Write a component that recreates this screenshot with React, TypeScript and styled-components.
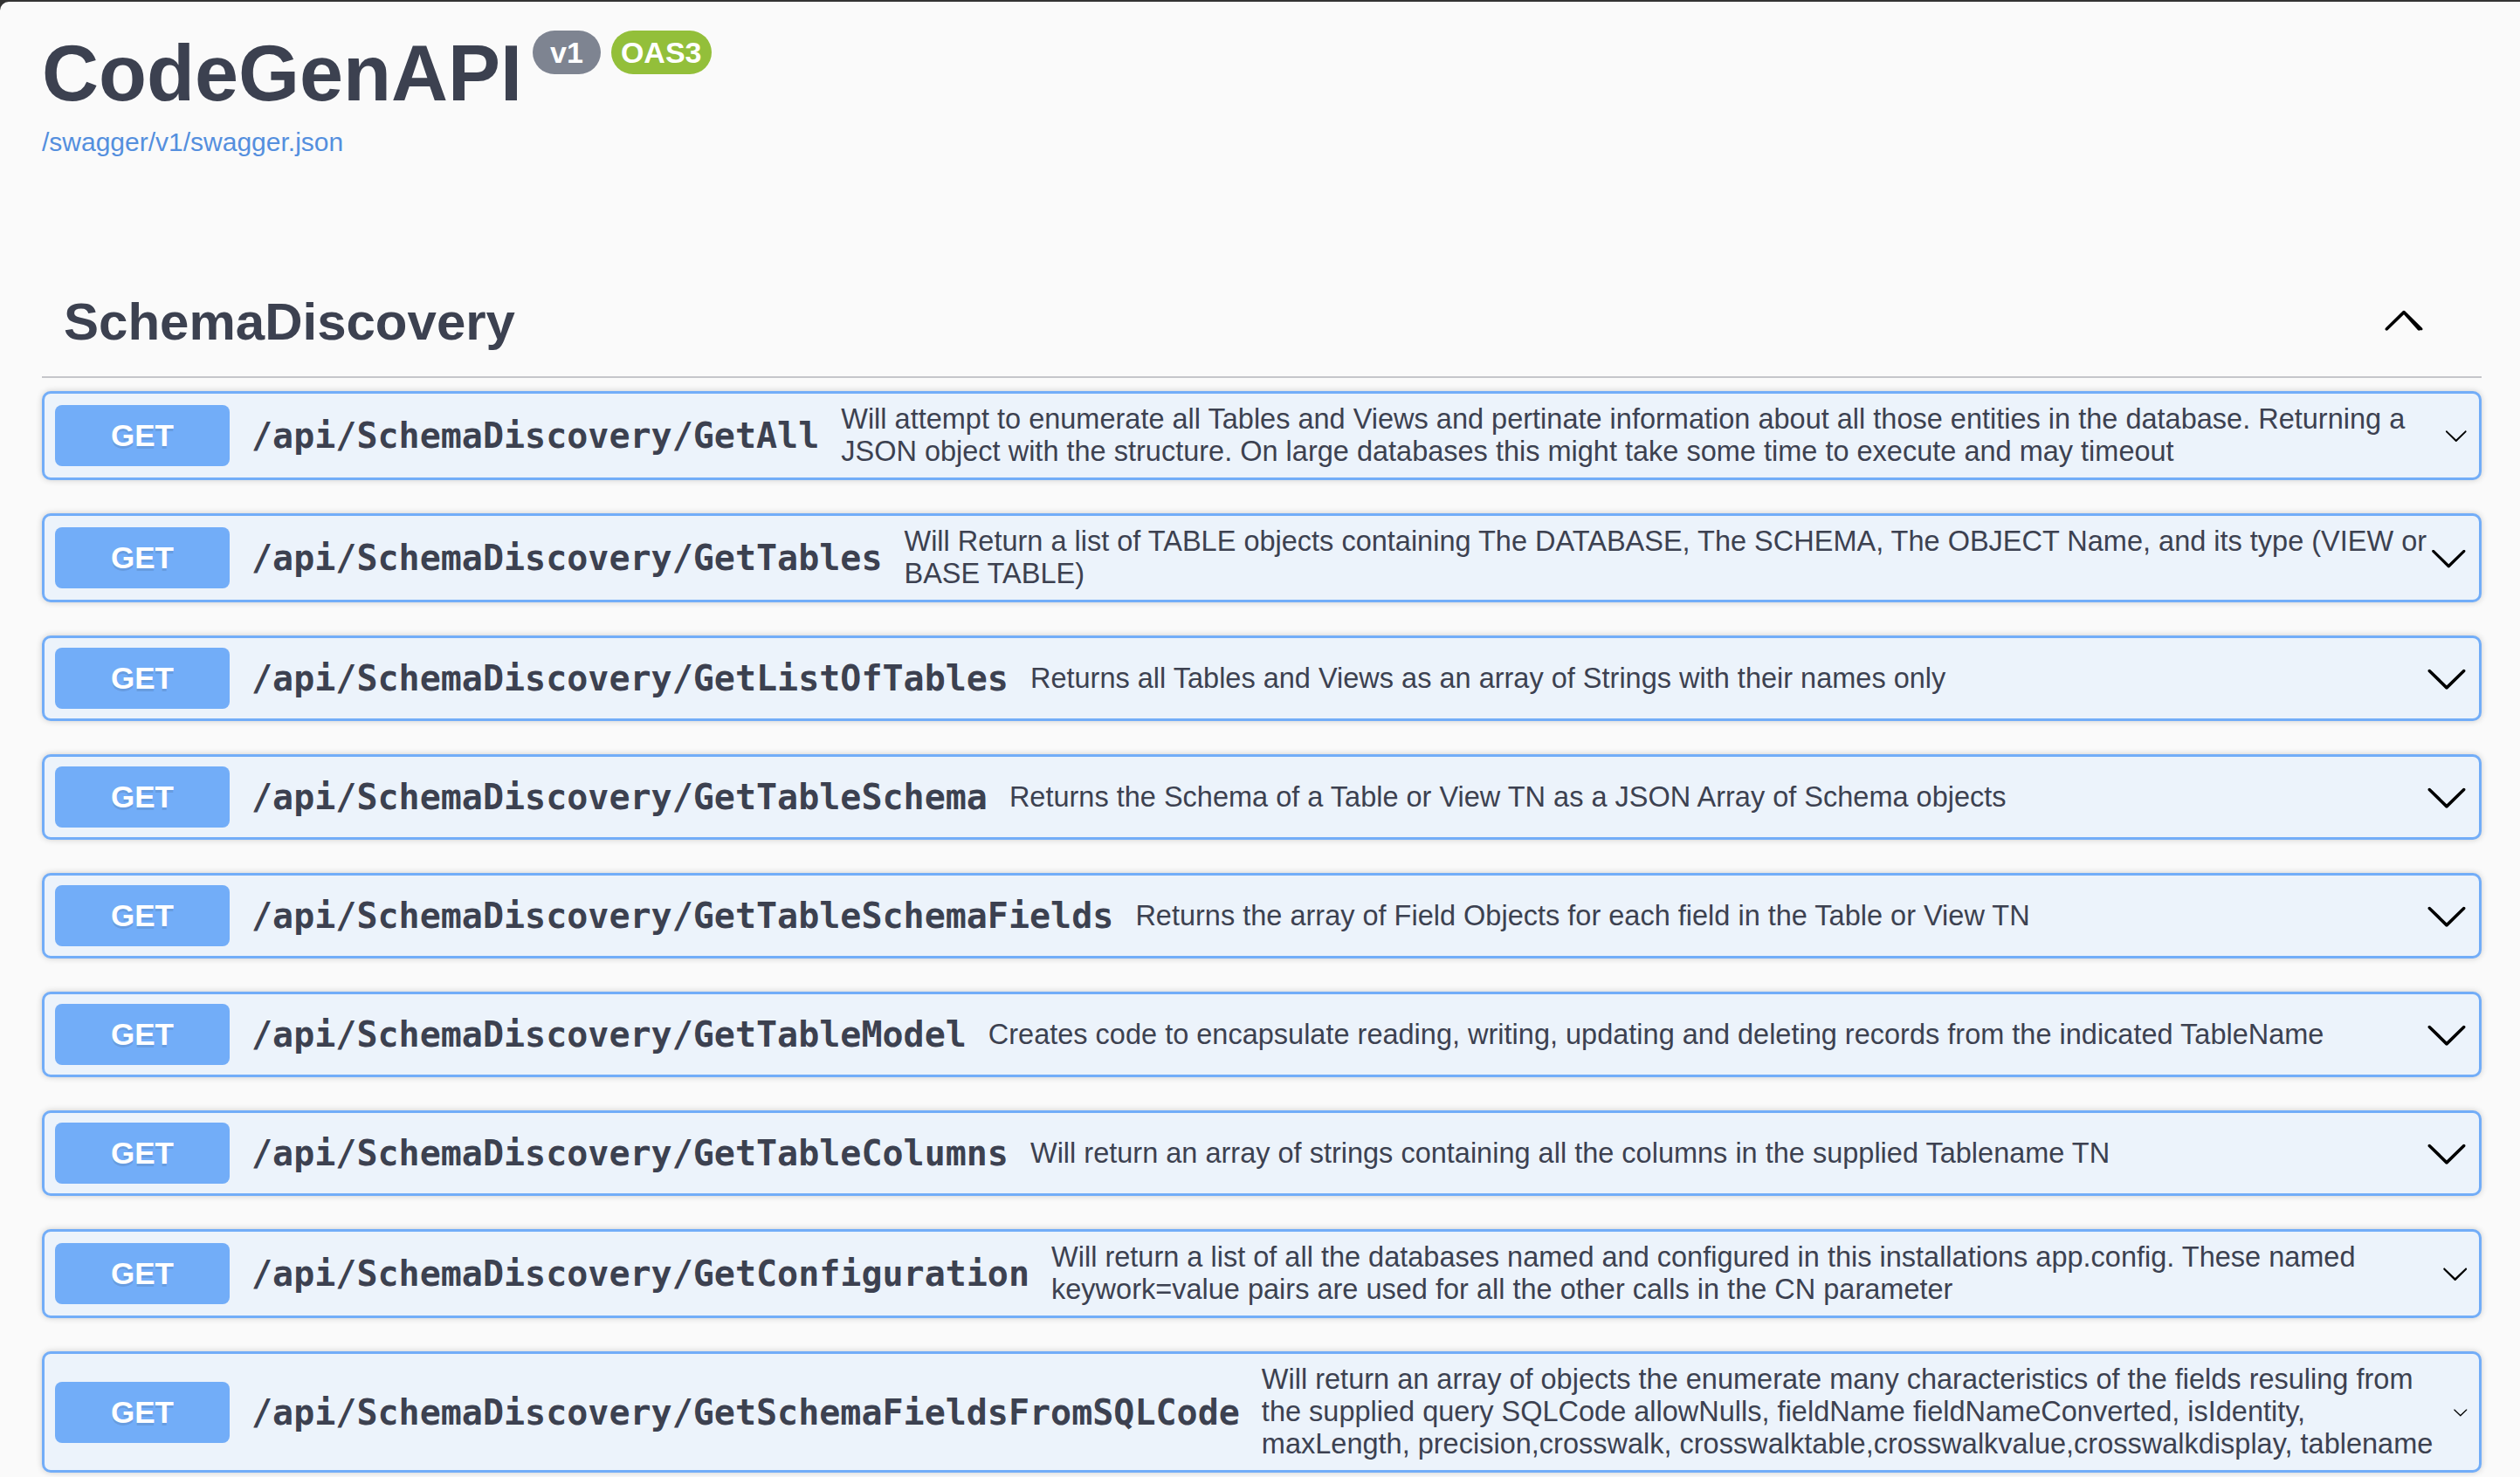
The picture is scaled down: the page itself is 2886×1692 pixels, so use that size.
import styled, { createGlobalStyle } from "styled-components";

interface IEndpoint {
  path: string;
  description: string;
}

const endpoints: IEndpoint[] = [
  {
    path: "/api/SchemaDiscovery/GetAll",
    description:
      "Will attempt to enumerate all Tables and Views and pertinate information about all those entities in the database. Returning a JSON object with the structure. On large databases this might take some time to execute and may timeout",
  },
  {
    path: "/api/SchemaDiscovery/GetTables",
    description:
      "Will Return a list of TABLE objects containing The DATABASE, The SCHEMA, The OBJECT Name, and its type (VIEW or BASE TABLE)",
  },
  {
    path: "/api/SchemaDiscovery/GetListOfTables",
    description:
      "Returns all Tables and Views as an array of Strings with their names only",
  },
  {
    path: "/api/SchemaDiscovery/GetTableSchema",
    description:
      "Returns the Schema of a Table or View TN as a JSON Array of Schema objects",
  },
  {
    path: "/api/SchemaDiscovery/GetTableSchemaFields",
    description:
      "Returns the array of Field Objects for each field in the Table or View TN",
  },
  {
    path: "/api/SchemaDiscovery/GetTableModel",
    description:
      "Creates code to encapsulate reading, writing, updating and deleting records from the indicated TableName",
  },
  {
    path: "/api/SchemaDiscovery/GetTableColumns",
    description:
      "Will return an array of strings containing all the columns in the supplied Tablename TN",
  },
  {
    path: "/api/SchemaDiscovery/GetConfiguration",
    description:
      "Will return a list of all the databases named and configured in this installations app.config. These named keywork=value pairs are used for all the other calls in the CN parameter",
  },
  {
    path: "/api/SchemaDiscovery/GetSchemaFieldsFromSQLCode",
    description:
      "Will return an array of objects the enumerate many characteristics of the fields resuling from the supplied query SQLCode allowNulls, fieldName fieldNameConverted, isIdentity, maxLength, precision,crosswalk, crosswalktable,crosswalkvalue,crosswalkdisplay, tablename",
  },
];

const GlobalStyle = createGlobalStyle`
  html, body {
    margin: 0;
    padding: 0;
    background: #333333;
  }
  * {
    box-sizing: border-box;
  }
`;

// arrow shapes taken from swagger-ui's sprite
const ArrowDown = () => (
  <Arrow viewBox="0 0 20 20" aria-hidden="true">
    <path d="M17.418 6.109c.272-.268.709-.268.979 0s.271.701 0 .969l-7.908 7.83c-.27.268-.707.268-.979 0l-7.908-7.83c-.27-.268-.27-.701 0-.969.271-.268.709-.268.979 0L10 13.25l7.418-7.141z" />
  </Arrow>
);

const ArrowUp = () => (
  <TagArrow viewBox="0 0 20 20" aria-hidden="true">
    <path d="M17.418 14.908c-.272.268-.709.268-.979 0L10 7.726l-7.418 7.182c-.27.268-.707.268-.979 0a.673.673 0 0 1 0-.969l7.908-7.83c.27-.268.707-.268.979 0l7.908 7.83a.672.672 0 0 1 0 .969z" />
  </TagArrow>
);

function App() {
  return (
    <>
      <GlobalStyle />
      <Page>
        <Wrapper>
          <Info>
            <TitleRow>
              <Title>CodeGenAPI</Title>
              <Badge $color="#7e8491" $pad={20}>
                v1
              </Badge>
              <Badge $color="#93bf3a" $pad={11}>
                OAS3
              </Badge>
            </TitleRow>
            <SpecLink href="#">/swagger/v1/swagger.json</SpecLink>
          </Info>

          <TagSection>
            <TagHeader>
              <TagName>SchemaDiscovery</TagName>
              <ArrowUp />
            </TagHeader>
            {endpoints.map((ep) => (
              <OpBlock key={ep.path}>
                <Method>GET</Method>
                <Path>{ep.path}</Path>
                <Description>{ep.description}</Description>
                <ArrowDown />
              </OpBlock>
            ))}
          </TagSection>
        </Wrapper>
      </Page>
    </>
  );
}

const Page = styled.div`
  margin-top: 2px;
  min-height: 1690px;
  background: #fafafa;
  border-top-left-radius: 10px;
  overflow: hidden;
`;

const Wrapper = styled.div`
  padding: 0 44px 0 48px;
`;

const Info = styled.div`
  padding-top: 31px;
  margin-bottom: 129px;
`;

const TitleRow = styled.div`
  display: flex;
  align-items: flex-start;
`;

const Title = styled.h2`
  margin: 0;
  font-family: "Liberation Sans", Arial, sans-serif;
  font-size: 90px;
  font-weight: bold;
  line-height: 103px;
  color: #3c4150;
`;

const Badge = styled.span<{ $color: string; $pad: number }>`
  margin: 2px 0 0 12px;
  height: 50px;
  padding: 0 ${(props) => props.$pad}px;
  display: flex;
  align-items: center;
  border-radius: 140px;
  background: ${(props) => props.$color};
  color: #ffffff;
  font-family: "Liberation Sans", Arial, sans-serif;
  font-size: 34px;
  font-weight: bold;
`;

const SpecLink = styled.a`
  display: block;
  margin-top: 10px;
  font-family: "Liberation Sans", Arial, sans-serif;
  font-size: 30px;
  line-height: 34px;
  color: #548fde;
  text-decoration: none;
`;

const TagSection = styled.div``;

const TagHeader = styled.div`
  display: flex;
  align-items: center;
  padding: 25px 64px 28px 25px;
  margin-bottom: 15px;
  border-bottom: 2.5px solid #c5c6ca;
`;

const TagName = styled.h3`
  flex: 1;
  margin: 0;
  font-family: "Liberation Sans", Arial, sans-serif;
  font-size: 60px;
  font-weight: bold;
  color: #3c4150;
`;

const TagArrow = styled.svg`
  width: 50px;
  height: 50px;
  margin-top: -6px;
  fill: #000000;
`;

const OpBlock = styled.div`
  display: flex;
  align-items: center;
  margin-bottom: 38px;
  padding: 11px 12px;
  border: 3px solid #72adf8;
  border-radius: 10px;
  background: #ecf3fb;
  box-shadow: 0 0 7px rgba(0, 0, 0, 0.19);
`;

const Method = styled.span`
  flex: none;
  width: 200px;
  height: 70px;
  display: flex;
  align-items: center;
  justify-content: center;
  border-radius: 8px;
  background: #72adf8;
  color: #ffffff;
  font-family: "Liberation Sans", Arial, sans-serif;
  font-size: 35px;
  font-weight: bold;
  text-shadow: 0 2.5px 0 rgba(0, 0, 0, 0.1);
`;

const Path = styled.span`
  flex-shrink: 0;
  padding: 0 25px;
  font-family: "DejaVu Sans Mono", Menlo, monospace;
  font-size: 40px;
  font-weight: bold;
  color: #3c4150;
  white-space: nowrap;
`;

const Description = styled.div`
  flex: 1 1 auto;
  word-break: break-word;
  font-family: "Liberation Sans", Arial, sans-serif;
  font-size: 32.5px;
  line-height: 37px;
  color: #3c4150;
`;

const Arrow = styled.svg`
  flex: 0 1 50px;
  min-width: 0;
  width: 50px;
  height: 50px;
  fill: #000000;
`;

export default App;
